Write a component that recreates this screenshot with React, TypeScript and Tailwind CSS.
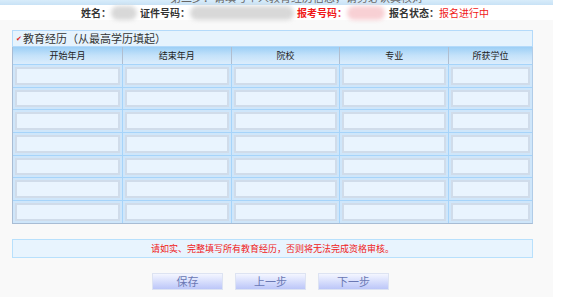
import React from 'react';

const columns = [
  { label: '开始年月', w: 'w-[110px]' },
  { label: '结束年月', w: 'w-[109px]' },
  { label: '院校', w: 'w-[109px]' },
  { label: '专业', w: 'w-[109px]' },
  { label: '所获学位', w: 'w-[83px]' },
];

const rows = [0, 1, 2, 3, 4, 5, 6];

const Blur: React.FC<{ w: string; pink?: boolean }> = ({ w, pink }) => (
  <span className={`${w} h-[14px] rounded-full blur-[2px] ${pink ? 'bg-[#f8d0d4]' : 'bg-[#d8d8d8]'}`} />
);

const Btn: React.FC<{ label: string }> = ({ label }) => (
  <button className="w-[71px] h-[17px] border border-[#dde3f2] bg-gradient-to-b from-[#f4f6ff] to-[#bcc6f8] text-[11px] leading-none text-[#6a78b4]">
    {label}
  </button>
);

export default function App() {
  return (
    <div className="w-[565px] h-[297px] bg-white overflow-hidden" style={{ fontFamily: '"Noto Sans CJK SC", "Noto Sans", sans-serif' }}>
      <div className="w-[553px] h-full bg-[#f9f9f9]">
        <div className="h-[5px] bg-gradient-to-b from-[#d8ecfa] to-[#c8e2f6] overflow-hidden">
          <div className="-mt-[8px] text-center text-[11px] leading-[11px] text-[#666] pl-[40px]">第二步：请填写个人教育经历信息，请务必认真核对</div>
        </div>
        <div className="h-[15px] bg-white flex items-center pl-[81px] text-[10px] leading-none font-bold text-[#333]">
          <span>姓名：</span>
          <Blur w="w-[26px]" />
          <span className="ml-[3px]">证件号码：</span>
          <Blur w="w-[104px]" />
          <span className="ml-[3px] text-[#f01818]">报考号码：</span>
          <Blur w="w-[38px]" pink />
          <span className="ml-[4px]">报名状态：</span>
          <span className="font-normal text-[#f01818]">报名进行中</span>
        </div>

        <div className="pl-[12px] pt-[10px]">
          <div className="w-[521px]">
            <div className="h-[17px] bg-[#e6f3fd] border border-[#b4dafa] flex items-center pl-[3px] text-[11px] text-[#333] leading-none">
              <span className="text-[#e02020] text-[7px] mr-[1px]">✔</span>
              教育经历（从最高学历填起）
            </div>
            <div className="border-l border-b border-[#a8bcd4] border-r border-r-[#b0cce8]">
              <div className="flex h-[17px] bg-gradient-to-b from-[#9ccff6] via-[#c4e2fa] to-[#dcedfc]">
                {columns.map((c, i) => (
                  <div key={c.label} className={`${c.w} flex items-center justify-center text-[9px] text-[#222] ${i < columns.length - 1 ? 'border-r border-[#b0bed0]' : ''}`}>
                    {c.label}
                  </div>
                ))}
              </div>
              {rows.map(r => (
                <div key={r} className="flex h-[22.7px] bg-[#cfe6fa] border-t border-[#a6d4fa]">
                  {columns.map((c, i) => (
                    <div key={c.label} className={`${c.w} p-[2px] ${i < columns.length - 1 ? 'border-r border-[#a6d4fa]' : ''}`}>
                      <div className="h-full border-2 border-[#d0dcea] bg-[#e9f4fe]" />
                    </div>
                  ))}
                </div>
              ))}
            </div>

            <div className="mt-[15px] h-[19px] bg-[#e8f4fe] border border-[#b8e0fc] flex items-center justify-center text-[9px] text-[#f02020] leading-none">
              请如实、完整填写所有教育经历，否则将无法完成资格审核。
            </div>

            <div className="mt-[15px] flex justify-center gap-[12px] pr-[4px]">
              <Btn label="保存" />
              <Btn label="上一步" />
              <Btn label="下一步" />
            </div>
          </div>
        </div>
      </div>
    </div>
  );
}
